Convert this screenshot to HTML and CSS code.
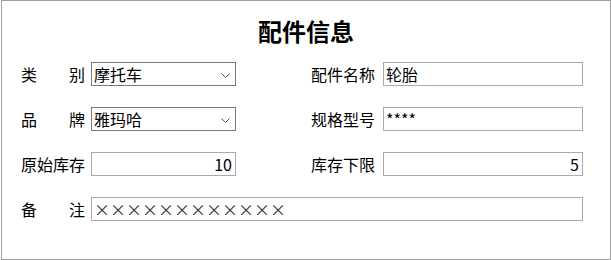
FILE: index.html
```html
<!DOCTYPE html>
<html lang="zh-CN">
<head>
  <meta charset="UTF-8">
  <title>配件信息</title>
  <link rel="stylesheet" href="styles.css">
</head>
<body>

<div class="frame">
  <h1 class="title">配件信息</h1>

  <div class="form">
    <label class="lbl spread"><span>类</span><span>别</span></label>
    <div class="select">
      <span>摩托车</span>
      <svg width="9" height="5" viewBox="0 0 9 5"><path d="M0.5 0.5 L4.5 4.5 L8.5 0.5" fill="none" stroke="#555" stroke-width="1"/></svg>
    </div>
    <label class="lbl right">配件名称</label>
    <input class="field" type="text" value="轮胎" readonly>

    <label class="lbl spread"><span>品</span><span>牌</span></label>
    <div class="select">
      <span>雅玛哈</span>
      <svg width="9" height="5" viewBox="0 0 9 5"><path d="M0.5 0.5 L4.5 4.5 L8.5 0.5" fill="none" stroke="#555" stroke-width="1"/></svg>
    </div>
    <label class="lbl right">规格型号</label>
    <input class="field" type="text" value="****" readonly>

    <label class="lbl">原始库存</label>
    <input class="field num" type="text" value="10" readonly>
    <label class="lbl right">库存下限</label>
    <input class="field num" type="text" value="5" readonly>

    <label class="lbl spread"><span>备</span><span>注</span></label>
    <input class="field wide" type="text" value="××××××××××××" readonly>
  </div>
</div>

</body>
</html>
```

FILE: styles.css
```css
body {
  margin: 0;
  font-family: "Noto Sans CJK SC", "Liberation Sans", sans-serif;
  background-color: #ffffff;
  color: #000000;
}
.frame {
  box-sizing: border-box;
  width: 610px;
  height: 260px;
  margin-left: 1px;
  border: 1px solid #a0a0a0;
  padding: 18px 0 0 19px;
}
.title {
  margin: 0;
  font-size: 24px;
  line-height: 24px;
  font-weight: bold;
  text-align: center;
  padding-right: 19px;
}
.form {
  display: grid;
  grid-template-columns: 70px 145px 147px 200px;
  grid-auto-rows: 24px;
  row-gap: 21px;
  margin-top: 19px;
}
.lbl {
  font-size: 16px;
  line-height: 24px;
  width: 64px;
  white-space: nowrap;
}
.lbl.spread {
  display: flex;
  justify-content: space-between;
}
.lbl.right {
  justify-self: end;
  text-align: right;
  margin-right: 8px;
}
.select {
  box-sizing: border-box;
  height: 24px;
  border: 1px solid #7a7a7a;
  display: flex;
  align-items: center;
  justify-content: space-between;
  padding: 0 5px 0 2px;
  font-size: 16px;
}
.select svg {
  margin-top: 2px;
}
.field {
  box-sizing: border-box;
  height: 24px;
  width: 100%;
  margin: 0;
  border: 1px solid #ababab;
  padding: 0 3px 0 2px;
  font-family: "Noto Sans CJK SC", "Liberation Sans", sans-serif;
  font-size: 16px;
  color: #000000;
  outline: none;
}
.field.num {
  text-align: right;
}
.field.wide {
  grid-column: 2 / 5;
  color: #333333;
}
```
